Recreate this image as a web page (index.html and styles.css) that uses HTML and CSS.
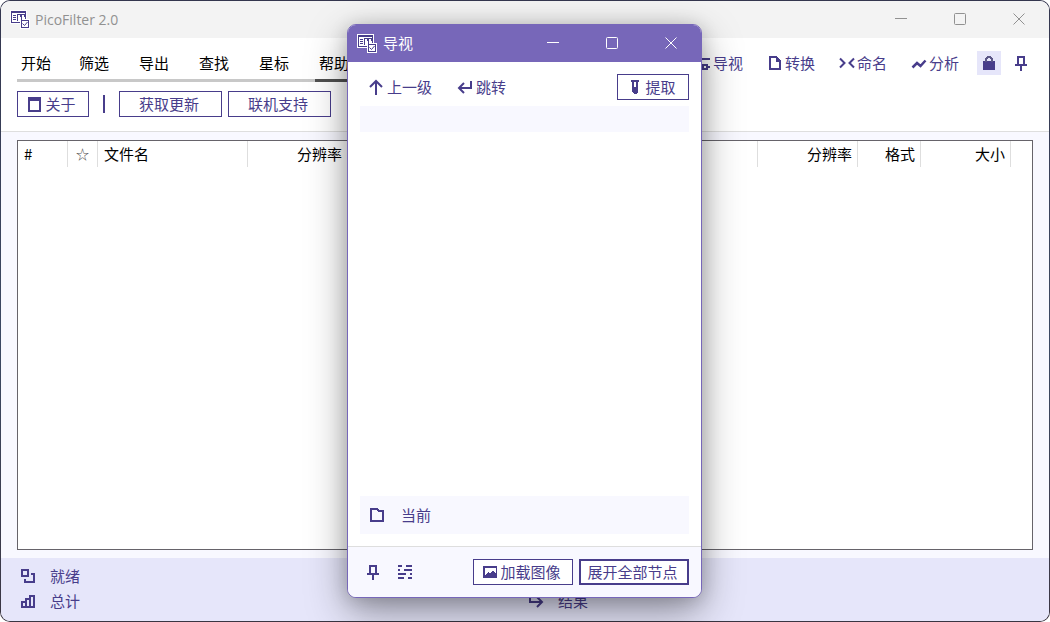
FILE: index.html
```html
<!DOCTYPE html>
<html lang="zh-CN">
<head>
<meta charset="utf-8">
<title>PicoFilter 2.0</title>
<link rel="stylesheet" href="styles.css">
</head>
<body>
<svg class="defs" aria-hidden="true">
  <symbol id="i-app" viewBox="0 0 20 19">
    <path fill="#fff" d="M0 0h17v9h3v10h-10v-5h-10z"/>
    <path fill="#483d8b" d="M1 1h15v8h-1v-6h-13v9h8v1h-9z"/>
    <path fill="#483d8b" d="M3 5h3v1h-3zM3 7h3v1h-3zM3 9h3v1h-3zM7 4h4v1h-3v6h-1zM10 5h1v2h-1zM11 4h4v1h-3v6h-1zM14 5h1v2h-1z"/>
    <path fill="#483d8b" fill-rule="evenodd" d="M11 10h8v8h-8zM12 11v6h6v-6z"/>
    <path fill="none" stroke="#483d8b" d="M12.500 13.500l2 2l3-3.500"/>
  </symbol>
  <symbol id="i-min" viewBox="0 0 12 12"><path d="M0 5.500h12"/></symbol>
  <symbol id="i-max" viewBox="0 0 12 12"><rect x=".5" y=".5" width="11" height="11" rx="1"/></symbol>
  <symbol id="i-close" viewBox="0 0 12 12"><path d="M.5.5l11 11M11.500.5l-11 11"/></symbol>
  <symbol id="i-nav" viewBox="0 0 16 16"><path d="M1 4h14M1 12h5M12 12h3"/><rect x="8" y="10" width="4" height="4"/></symbol>
  <symbol id="i-doc" viewBox="0 0 16 16"><path d="M3 2h6l4 4v8h-10z"/><path class="solid" d="M9 2h2v3h3v2h-5z"/></symbol>
  <symbol id="i-rename" viewBox="0 0 16 16"><path d="M1 3.500l4.500 4.500l-4.500 4.500M15 3.500l-4.500 4.500l4.500 4.500"/></symbol>
  <symbol id="i-chart" viewBox="0 0 16 16"><path stroke-width="2.500" d="M1.500 12.500l4.500-4.500l3.500 3l5-5.500"/></symbol>
  <symbol id="i-lock" viewBox="0 0 16 16"><path class="solid" d="M2 6h12v9h-12z"/><path d="M5 7v-3l2-2h2l2 2v3" stroke="#5b5787"/></symbol>
  <symbol id="i-pin" viewBox="0 0 16 16"><path d="M5 10v-8h6v8M2 10h12M8 10v6"/></symbol>
  <symbol id="i-window" viewBox="0 0 16 16"><path class="solid" fill-rule="evenodd" d="M1 1h13v15h-13zM3 5v9h9v-9z"/></symbol>
  <symbol id="i-up" viewBox="0 0 16 16"><path d="M8 16v-14M2 8l6-6l6 6"/></symbol>
  <symbol id="i-return" viewBox="0 0 16 16"><path d="M14 2v7h-12M7 4l-5 5l5 5"/></symbol>
  <symbol id="i-tube" viewBox="0 0 16 16"><path class="solid" fill-rule="evenodd" d="M4 1h8v2h-1v10l-2 2h-2l-2-2v-10h-1zM7 3v5h2v-5z"/></symbol>
  <symbol id="i-folder" viewBox="0 0 16 16"><path d="M2 2h6l2 2h4v10h-12z"/></symbol>
  <symbol id="i-list" viewBox="0 0 16 16"><path d="M1 2h4M9 2h6M1 6h2M7 6h8M1 10h8M13 10h2M1 14h6M11 14h4"/></symbol>
  <symbol id="i-image" viewBox="0 0 16 16"><path class="solid" fill-rule="evenodd" d="M1 2h14v12h-14zM3 11l3-3l2 1l3-3l3 4v-6h-11z"/></symbol>
  <symbol id="i-ready" viewBox="0 0 16 16"><path d="M2 2h6v6h-6zM11 6h3v8h-9v-3"/></symbol>
  <symbol id="i-bars" viewBox="0 0 16 16"><path d="M2 9h4v5h-4zM6 6h4v8h-4zM10 3h4v11h-4z"/></symbol>
  <symbol id="i-result" viewBox="0 0 16 16"><path d="M2 1v8h12M9 4l5 5l-5 5"/></symbol>
</svg>

<div class="desktop">
  <main class="window">
    <header class="titlebar">
      <svg class="app-icon"><use href="#i-app"/></svg>
      <h1 class="title">PicoFilter 2.0</h1>
      <button class="caption" aria-label="最小化"><svg><use href="#i-min"/></svg></button>
      <button class="caption" aria-label="最大化"><svg><use href="#i-max"/></svg></button>
      <button class="caption" aria-label="关闭"><svg><use href="#i-close"/></svg></button>
    </header>

    <section class="ribbon">
      <div class="ribbon-top">
        <nav class="tabs">
          <button class="tab">开始</button>
          <button class="tab">筛选</button>
          <button class="tab">导出</button>
          <button class="tab">查找</button>
          <button class="tab">星标</button>
          <button class="tab active">帮助</button>
        </nav>
        <div class="tools">
          <button class="link-button"><svg class="icon"><use href="#i-nav"/></svg>导视</button>
          <button class="link-button"><svg class="icon"><use href="#i-doc"/></svg>转换</button>
          <button class="link-button"><svg class="icon smooth"><use href="#i-rename"/></svg>命名</button>
          <button class="link-button"><svg class="icon smooth"><use href="#i-chart"/></svg>分析</button>
          <div class="toggles">
            <button class="icon-button on" aria-label="锁定"><svg class="icon"><use href="#i-lock"/></svg></button>
            <button class="icon-button" aria-label="固定"><svg class="icon"><use href="#i-pin"/></svg></button>
          </div>
        </div>
      </div>
      <div class="actions">
        <button class="button"><svg class="icon"><use href="#i-window"/></svg>关于</button>
        <span class="divider"></span>
        <button class="button wide">获取更新</button>
        <button class="button wide">联机支持</button>
      </div>
    </section>

    <section class="lists">
      <div class="list">
        <table class="grid">
          <colgroup><col class="c-num"><col class="c-star"><col class="c-name"><col class="c-res"><col class="c-fmt"><col class="c-size"><col></colgroup>
          <thead><tr><th>#</th><th class="star">☆</th><th>文件名</th><th class="end">分辨率</th><th></th><th></th><td></td></tr></thead>
        </table>
      </div>
      <div class="list">
        <table class="grid">
          <colgroup><col class="c-num"><col class="c-star"><col class="c-name"><col class="c-res"><col class="c-fmt"><col class="c-size"><col></colgroup>
          <thead><tr><th></th><th></th><th></th><th class="end">分辨率</th><th class="end">格式</th><th class="end">大小</th><td></td></tr></thead>
        </table>
      </div>
    </section>

    <footer class="status">
      <div class="status-column">
        <p class="status-item"><svg class="icon"><use href="#i-ready"/></svg>就绪</p>
        <p class="status-item"><svg class="icon"><use href="#i-bars"/></svg>总计</p>
      </div>
      <div class="status-column">
        <p class="status-item"><svg class="icon smooth"><use href="#i-result"/></svg>结果</p>
      </div>
    </footer>
  </main>

  <section class="dialog" role="dialog" aria-labelledby="dialog-title">
    <header class="titlebar">
      <svg class="app-icon"><use href="#i-app"/></svg>
      <h2 class="title" id="dialog-title">导视</h2>
      <button class="caption" aria-label="最小化"><svg><use href="#i-min"/></svg></button>
      <button class="caption" aria-label="最大化"><svg><use href="#i-max"/></svg></button>
      <button class="caption" aria-label="关闭"><svg><use href="#i-close"/></svg></button>
    </header>
    <div class="dialog-body">
      <div class="dialog-tools">
        <button class="link-button"><svg class="icon smooth"><use href="#i-up"/></svg>上一级</button>
        <button class="link-button"><svg class="icon smooth"><use href="#i-return"/></svg>跳转</button>
        <button class="button"><svg class="icon"><use href="#i-tube"/></svg>提取</button>
      </div>
      <input class="path" type="text" aria-label="路径">
      <div class="tree"></div>
      <div class="current"><svg class="icon"><use href="#i-folder"/></svg>当前</div>
    </div>
    <footer class="dialog-footer">
      <button class="icon-button" aria-label="固定"><svg class="icon"><use href="#i-pin"/></svg></button>
      <button class="icon-button" aria-label="列表"><svg class="icon"><use href="#i-list"/></svg></button>
      <button class="button load"><svg class="icon"><use href="#i-image"/></svg>加载图像</button>
      <button class="button primary">展开全部节点</button>
    </footer>
  </section>
</div>
</body>
</html>
```
FILE: styles.css
```css
:root {
  --ink: #483d8b;
  --lavender: #e6e6fa;
  --ghost: #f8f8ff;
  --line: #dedede;
}

* { box-sizing: border-box; }

body {
  margin: 0;
  background: #fff;
  color: #000;
  font: 15px/20px "Noto Sans CJK SC", sans-serif;
}

h1, h2, p { margin: 0; font: inherit; }

button {
  margin: 0;
  padding: 0;
  border: 0;
  background: none;
  color: inherit;
  font: inherit;
  white-space: nowrap;
}

.defs { position: absolute; width: 0; height: 0; }

.icon {
  flex: none;
  width: 16px;
  height: 16px;
  fill: none;
  stroke: var(--ink);
  stroke-width: 2px;
  shape-rendering: crispEdges;
}

.smooth { shape-rendering: auto; }
.solid { fill: var(--ink); stroke: none; }

.desktop {
  position: relative;
  display: flex;
  height: 100vh;
  padding: 1px;
  border-radius: 10px;
  background: linear-gradient(#34364e, #3c4964 55%, #3a3542);
  overflow: hidden;
}

.window {
  flex: 1;
  display: flex;
  flex-direction: column;
  min-width: 0;
  border-radius: 9px;
  background: var(--ghost);
  overflow: hidden;
}

.titlebar {
  display: flex;
  align-items: center;
  height: 37px;
  padding-left: 9px;
  background: #f3f3f3;
  color: #919191;
}

.app-icon { flex: none; width: 20px; height: 19px; }

.title {
  flex: 1;
  padding-left: 5px;
  font: 14px/20px "Open Sans", sans-serif;
}

.caption {
  display: grid;
  place-items: center;
  width: 59px;
  height: 37px;
  padding: 0 1px 1px 0;
}

.caption svg {
  width: 12px;
  height: 12px;
  fill: none;
  stroke: currentColor;
  stroke-width: 1px;
}

.ribbon {
  padding: 13px 16px 14px;
  border-bottom: 1px solid var(--line);
  background: #fff;
}

.ribbon-top {
  display: flex;
  justify-content: space-between;
  align-items: flex-start;
}

.tabs { display: flex; }

.tab {
  width: 60px;
  height: 31px;
  padding: 0 4px 4px;
  border-bottom: 3px solid #c8c8c8;
  text-align: left;
}

.tab:first-child { width: 58px; }
.tab.active { border-color: #505050; }

.tools { display: flex; gap: 24px; color: var(--ink); }
.toggles { display: flex; gap: 8px; margin-left: -6px; }

.link-button {
  display: flex;
  align-items: center;
  gap: 2px;
  height: 24px;
  color: var(--ink);
}

.icon-button {
  display: grid;
  place-items: center;
  width: 24px;
  height: 24px;
}

.icon-button.on { background: var(--lavender); }

.actions {
  display: flex;
  align-items: center;
  gap: 6px;
  margin-top: 9px;
}

.button {
  display: flex;
  align-items: center;
  justify-content: center;
  gap: 2px;
  width: 72px;
  height: 26px;
  padding: 0 3px 1px 0;
  border: 1px solid var(--ink);
  background: #fff;
  color: var(--ink);
}

.wide { width: 103px; }

.divider {
  width: 2px;
  height: 18px;
  margin: 0 8px;
  background: var(--ink);
}

.lists {
  flex: 1;
  display: grid;
  grid-template-columns: 1fr 1fr;
  gap: 4px;
  padding: 8px 16px;
}

.list {
  border: 1px solid #66636a;
  background: #fff;
  overflow: hidden;
}

.grid {
  width: 100%;
  table-layout: fixed;
  border-collapse: separate;
  border-spacing: 0;
}

.grid th {
  height: 26px;
  padding: 0 5px 0 6px;
  border-right: 1px solid var(--line);
  font-weight: 400;
  text-align: left;
  white-space: nowrap;
}

.grid .end { text-align: right; }

.grid .star {
  padding: 0;
  color: #555;
  font-size: 13px;
  text-align: center;
}

.c-num { width: 50px; }
.c-star { width: 30px; }
.c-name { width: 150px; }
.c-res { width: 100px; }
.c-fmt { width: 63px; }
.c-size { width: 90px; }

.status {
  display: grid;
  grid-template-columns: 1fr 1fr;
  padding: 5px 14px 8px 18px;
  background: var(--lavender);
  color: var(--ink);
}

.status-column {
  display: flex;
  flex-direction: column;
  justify-content: flex-end;
}

.status-item {
  display: flex;
  align-items: center;
  gap: 14px;
  height: 25px;
  padding-left: 1px;
}

.dialog {
  position: absolute;
  top: 24px;
  bottom: 24px;
  left: calc(50% - 178px);
  display: flex;
  flex-direction: column;
  width: 355px;
  border: 1px solid #7767b9;
  border-radius: 9px;
  background: #fff;
  box-shadow: 0 14px 40px rgba(0, 0, 0, .38), 0 2px 18px rgba(0, 0, 0, .16);
  overflow: hidden;
}

.dialog .titlebar {
  background: #7767b9;
  color: #fff;
}

.dialog .title {
  padding: 0 0 2px 6px;
  font: 15px/20px "Noto Sans CJK SC", sans-serif;
}

.dialog-body {
  flex: 1;
  display: flex;
  flex-direction: column;
  padding: 12px;
}

.dialog-tools {
  display: flex;
  align-items: center;
  gap: 25px;
  padding-left: 8px;
}

.dialog-tools .link-button { gap: 3px; padding-bottom: 1px; }
.dialog-tools .button { margin-left: auto; }

.path {
  width: 100%;
  height: 26px;
  margin-top: 6px;
  padding: 0 8px;
  border: 0;
  background: var(--ghost);
  color: var(--ink);
  font: inherit;
}

.tree { flex: 1; }

.current {
  display: flex;
  align-items: center;
  gap: 16px;
  height: 38px;
  padding: 0 0 1px 9px;
  background: var(--ghost);
  color: var(--ink);
}

.dialog-footer {
  display: flex;
  align-items: center;
  gap: 6px;
  padding: 12px 12px 12px 13px;
  border-top: 1px solid var(--line);
  background: var(--ghost);
}

.dialog-footer .icon-button + .icon-button { margin-left: 2px; }
.load { width: 100px; margin-left: auto; }
.primary { width: 110px; border-width: 2px; }
```
